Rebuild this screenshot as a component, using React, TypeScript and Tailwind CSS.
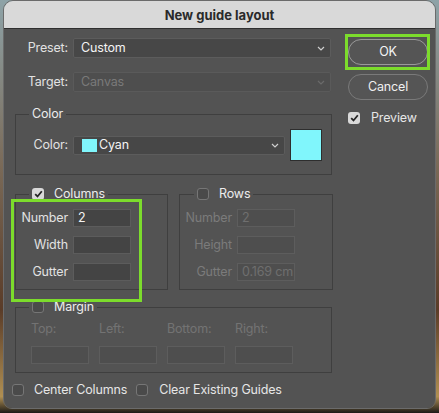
import React from "react";

const font = { fontFamily: "Inter, 'Liberation Sans', sans-serif" };

function Chevron({ dim }: { dim?: boolean }) {
  return (
    <svg width="8" height="5" viewBox="0 0 8 5" className="shrink-0">
      <path d="M1 1l3 3 3-3" fill="none" stroke={dim ? "#6a6a6a" : "#cfcfcf"} strokeWidth="1.2" />
    </svg>
  );
}

function Check({ on, dim }: { on?: boolean; dim?: boolean }) {
  if (on) {
    return (
      <span className="flex h-[12px] w-[12px] shrink-0 items-center justify-center rounded-[3px] bg-[#d9d9d9]">
        <svg width="9" height="8" viewBox="0 0 9 8">
          <path d="M1.2 4.2l2.3 2.3L7.8 1.3" fill="none" stroke="#262626" strokeWidth="1.8" />
        </svg>
      </span>
    );
  }
  return (
    <span
      className={`block h-[12px] w-[12px] shrink-0 rounded-[3px] border ${
        dim ? "border-[#6a6a6a] bg-[#4c4c4c]" : "border-[#767676] bg-[#4a4a4a]"
      }`}
    />
  );
}

function Field({ label, value, disabled }: { label: string; value?: string; disabled?: boolean }) {
  return (
    <div className="flex items-center gap-[5px]">
      <span className={`w-[52px] text-right ${disabled ? "text-[#7b7b7b]" : "text-[#e2e2e2]"}`}>{label}</span>
      <div
        className={`flex h-[18px] w-[58px] items-center whitespace-nowrap border px-[4px] ${
          disabled ? "border-[#5d5d5d] bg-[#4e4e4e] text-[#6f6f6f]" : "border-[#5c5c5c] bg-[#444444] text-[#f2f2f2]"
        }`}
      >
        {value}
      </div>
    </div>
  );
}

export default function App() {
  return (
    <div
      className="h-[413px] w-[439px] overflow-hidden bg-[linear-gradient(180deg,#8ea3a8_0%,#7a6a58_40%,#5a3c28_75%,#b08f52_96%,#1c1a18_100%)] pl-[3px] text-[12.5px] leading-[16px] tracking-[-0.15px]"
      style={font}
    >
      <div className="flex h-[409px] w-[433px] flex-col overflow-hidden rounded-t-[10px] rounded-b-[9px] border border-[#6b6b6b]">
        <div className="flex h-[28px] shrink-0 items-center justify-center border-b border-[#2f2f2f] bg-[#d9d9d9] text-[13px] font-bold tracking-normal text-[#2a2a2a]">
          New guide layout
        </div>

        <div className="flex flex-1 bg-[#535353]">
          {/* left column */}
          <div className="w-[344px] shrink-0">
            <div className="mt-[9px] flex items-center gap-[5px]">
              <span className="w-[64px] text-right text-[#e2e2e2]">Preset:</span>
              <div className="flex h-[20px] w-[258px] items-center justify-between rounded-[2px] border border-[#5c5c5c] bg-[#474747] pl-[7px] pr-[5px] text-[#f4f4f4]">
                Custom
                <Chevron />
              </div>
            </div>
            <div className="mt-[14px] flex items-center gap-[5px]">
              <span className="w-[64px] text-right text-[#e2e2e2]">Target:</span>
              <div className="flex h-[20px] w-[258px] items-center justify-between rounded-[2px] border border-[#5a5a5a] bg-[#4e4e4e] pl-[7px] pr-[5px] text-[#7a7a7a]">
                Canvas
                <Chevron dim />
              </div>
            </div>

            <fieldset className="ml-[11px] mt-[14px] w-[317px] border border-[#3f3f3f]">
              <legend className="ml-[13px] px-[3px] text-[#ececec]">Color</legend>
              <div className="mt-[7px] flex items-center gap-[5px] pb-[13px]">
                <span className="w-[52px] text-right text-[#e2e2e2]">Color:</span>
                <div className="flex h-[19px] w-[212px] items-center justify-between rounded-[2px] border border-[#5c5c5c] bg-[#474747] pl-[8px] pr-[5px] text-[#f4f4f4]">
                  <span className="flex items-center gap-[2px]">
                    <span className="h-[13px] w-[15px] bg-[#80f6fc]" />
                    Cyan
                  </span>
                  <Chevron />
                </div>
                <div className="h-[32px] w-[32px] border border-[#2e2e2e] bg-[#80f6fc]" />
              </div>
            </fieldset>

            <div className="ml-[11px] mt-[11px] flex gap-[11px]">
              <fieldset className="relative w-[153px] border border-[#3f3f3f]">
                <legend className="ml-[13px] px-[3px]">
                  <span className="flex items-center gap-[10px] text-[#ececec]">
                    <Check on />
                    Columns
                  </span>
                </legend>
                <div className="mt-[7px] flex flex-col gap-[9px] pb-[8px]">
                  <Field label="Number" value="2" />
                  <Field label="Width" />
                  <Field label="Gutter" />
                </div>
                <div className="pointer-events-none absolute left-[-5px] top-[-3px] h-[103px] w-[131px] border-[3px] border-[#7cdc2c]" />
              </fieldset>
              <fieldset className="w-[154px] border border-[#3f3f3f]">
                <legend className="ml-[14px] px-[3px]">
                  <span className="flex items-center gap-[10px] text-[#ececec]">
                    <Check />
                    Rows
                  </span>
                </legend>
                <div className="mt-[7px] flex flex-col gap-[9px] pb-[8px]">
                  <Field label="Number" value="2" disabled />
                  <Field label="Height" disabled />
                  <Field label="Gutter" value="0.169 cm" disabled />
                </div>
              </fieldset>
            </div>

            <fieldset className="ml-[11px] mt-[9px] w-[317px] border border-[#3f3f3f]">
              <legend className="ml-[13px] px-[3px]">
                <span className="flex items-center gap-[10px] text-[#ececec]">
                  <Check />
                  Margin
                </span>
              </legend>
              <div className="mt-[6px] flex gap-[10px] pb-[8px] pl-[15px]">
                {["Top:", "Left:", "Bottom:", "Right:"].map((l) => (
                  <div key={l} className="flex w-[58px] flex-col gap-[9px]">
                    <span className="text-[#737373]">{l}</span>
                    <div className="h-[18px] w-[58px] border border-[#5d5d5d] bg-[#4e4e4e]" />
                  </div>
                ))}
              </div>
            </fieldset>

            <div className="ml-[8px] mt-[9px] flex items-center text-[#e6e6e6]">
              <Check />
              <span className="ml-[10px]">Center Columns</span>
              <span className="ml-[9px] block">
                <Check />
              </span>
              <span className="ml-[11px]">Clear Existing Guides</span>
            </div>
          </div>

          {/* right column */}
          <div className="flex w-[80px] flex-col">
            <div className="relative mt-[10px]">
              <button className="flex h-[26px] w-[80px] items-center justify-center rounded-full border border-[#9a9a9a] bg-[#555555] text-[#f4f4f4]">
                OK
              </button>
              <div className="pointer-events-none absolute left-[-3px] top-[-5px] h-[36px] w-[85px] border-[3px] border-[#7cdc2c]" />
            </div>
            <button className="mt-[9px] flex h-[26px] w-[80px] items-center justify-center rounded-full border border-[#7a7a7a] bg-[#555555] text-[#f0f0f0]">
              Cancel
            </button>
            <div className="mt-[10px] flex items-center gap-[11px] text-[#e6e6e6]">
              <Check on />
              Preview
            </div>
          </div>
        </div>
      </div>
    </div>
  );
}
